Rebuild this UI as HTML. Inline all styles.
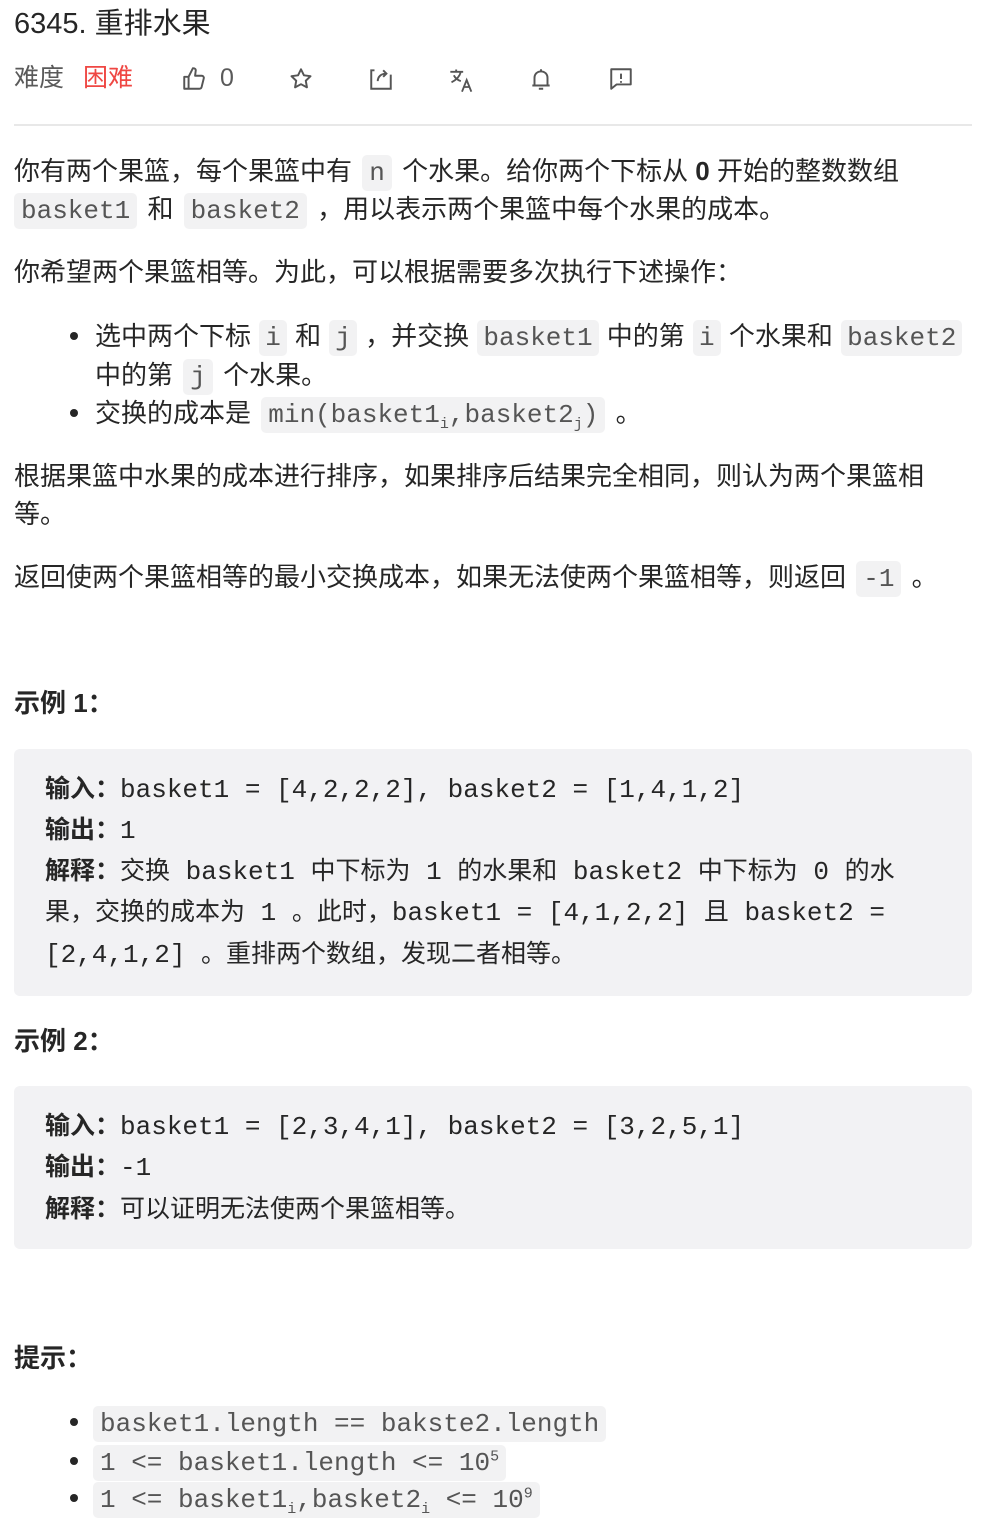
<!DOCTYPE html>
<html><head><meta charset="utf-8"><style>
*{margin:0;padding:0;box-sizing:border-box}
body{width:986px;height:1532px;background:#fff;position:relative;overflow:hidden;font-family:"Liberation Sans","Noto Sans CJK SC",sans-serif;color:#262626;font-size:26px}
.l{position:absolute;left:14px;white-space:nowrap;height:38px;line-height:38px}
code{font-family:"Liberation Mono",monospace;font-size:26px;background:#f2f2f3;color:#555;border-radius:5px;padding:3px 7px;margin:0 3px}
.tight code{padding:3px 6px;margin:0 1px}
.pre{position:absolute;left:14px;width:958px;background:#f2f2f4;border-radius:6px}
.pl{position:absolute;left:31px;white-space:nowrap;height:41px;line-height:41px;font-size:25px}
.m{font-family:"Liberation Mono",monospace;font-size:26px;white-space:pre}
b{font-weight:bold}
.dot{position:absolute;left:70px;width:8px;height:8px;border-radius:50%;background:#262626}
.ic{position:absolute;top:66px}
sub,sup{font-size:15px;line-height:0}
</style></head><body>
<div class="l" style="top:5px;font-size:29px">6345. 重排水果</div>
<div class="l" style="top:59px;color:#5a5a5a;font-size:25px">难度 <span style="color:#ef4743;margin-left:12px">困难</span></div>
<svg class="ic" style="left:181px" width="26" height="26" viewBox="0 0 24 24" fill="none" stroke="#555" stroke-width="1.8" stroke-linejoin="round"><path d="M3 10h4v11H3z M7 10l4-8c2 0 3 1 2.5 3L13 9h6c1.5 0 2.3 1.2 2 2.5l-2 8c-.3 1-1 1.5-2 1.5H7"/></svg>
<div class="l" style="top:59px;left:220px;color:#5a5a5a;font-size:25px">0</div>
<svg class="ic" style="left:288px" width="26" height="26" viewBox="0 0 24 24" fill="none" stroke="#555" stroke-width="1.8" stroke-linejoin="round"><path d="M12 3l2.7 5.6 6.1.8-4.4 4.2 1.1 6.1L12 16.8l-5.5 2.9 1.1-6.1-4.4-4.2 6.1-.8z"/></svg>
<svg class="ic" style="left:368px" width="26" height="26" viewBox="0 0 24 24" fill="none" stroke="#555" stroke-width="1.8"><path d="M6 4H3v17h18V8 M9 14c0-4 3-7 8-7 M14 4l3 3-3 3"/></svg>
<svg class="ic" style="left:448px" width="28" height="28" viewBox="0 0 24 24" fill="none" stroke="#555" stroke-width="1.6"><path d="M2 5h11 M7 3v2 M11 5c-1 4-4 7-8 9 M5 8c1 2 3 4 6 5 M12 22l4-10 4 10 M13.5 18h5"/></svg>
<svg class="ic" style="left:528px" width="26" height="26" viewBox="0 0 24 24" fill="none" stroke="#555" stroke-width="1.8" stroke-linejoin="round"><path d="M6 18V11c0-3.5 2.5-6 6-6s6 2.5 6 6v7H6z M4 18h16 M10 21h4 M12 3v2"/></svg>
<svg class="ic" style="left:608px" width="26" height="26" viewBox="0 0 24 24" fill="none" stroke="#555" stroke-width="1.8" stroke-linejoin="round"><path d="M3 3h18v14H8l-5 4z M12 7v5 M12 14v1.5"/></svg>
<div style="position:absolute;left:14px;top:124px;width:958px;height:2px;background:#e8e8e8"></div>

<div class="l" style="top:152px">你有两个果篮，每个果篮中有 <code>n</code> 个水果。给你两个下标从 <b>0</b> 开始的整数数组</div>
<div class="l" style="top:190px"><code style="margin-left:0">basket1</code> 和 <code>basket2</code> ，用以表示两个果篮中每个水果的成本。</div>
<div class="l" style="top:253px">你希望两个果篮相等。为此，可以根据需要多次执行下述操作：</div>
<div class="dot" style="top:332px"></div>
<div class="l tight" style="top:317px;left:95px">选中两个下标 <code>i</code> 和 <code>j</code> ，并交换 <code>basket1</code> 中的第 <code>i</code> 个水果和 <code>basket2</code></div>
<div class="l" style="top:356px;left:95px">中的第 <code>j</code> 个水果。</div>
<div class="dot" style="top:409px"></div>
<div class="l" style="top:394px;left:95px">交换的成本是 <code>min(basket1<sub>i</sub>,basket2<sub>j</sub>)</code> 。</div>
<div class="l" style="top:457px">根据果篮中水果的成本进行排序，如果排序后结果完全相同，则认为两个果篮相</div>
<div class="l" style="top:495px">等。</div>
<div class="l" style="top:558px">返回使两个果篮相等的最小交换成本，如果无法使两个果篮相等，则返回 <code>-1</code> 。</div>

<div class="l" style="top:684px"><b>示例 1：</b></div>
<div class="pre" style="top:749px;height:247px">
<div class="pl" style="top:20px"><b>输入：</b><span class="m">basket1 = [4,2,2,2], basket2 = [1,4,1,2]</span></div>
<div class="pl" style="top:61px"><b>输出：</b><span class="m">1</span></div>
<div class="pl" style="top:102px"><b>解释：</b>交换<span class="m"> basket1 </span>中下标为<span class="m"> 1 </span>的水果和<span class="m"> basket2 </span>中下标为<span class="m"> 0 </span>的水</div>
<div class="pl" style="top:143px">果，交换的成本为<span class="m"> 1 </span>。此时，<span class="m">basket1 = [4,1,2,2] </span>且<span class="m"> basket2 =</span></div>
<div class="pl" style="top:185px"><span class="m">[2,4,1,2] </span>。重排两个数组，发现二者相等。</div>
</div>
<div class="l" style="top:1022px"><b>示例 2：</b></div>
<div class="pre" style="top:1086px;height:163px">
<div class="pl" style="top:20px"><b>输入：</b><span class="m">basket1 = [2,3,4,1], basket2 = [3,2,5,1]</span></div>
<div class="pl" style="top:61px"><b>输出：</b><span class="m">-1</span></div>
<div class="pl" style="top:103px"><b>解释：</b>可以证明无法使两个果篮相等。</div>
</div>

<div class="l" style="top:1339px"><b>提示：</b></div>
<div class="dot" style="top:1418px"></div>
<div class="l" style="top:1403px;left:90px"><code>basket1.length == bakste2.length</code></div>
<div class="dot" style="top:1457px"></div>
<div class="l" style="top:1442px;left:90px"><code>1 &lt;= basket1.length &lt;= 10<sup>5</sup></code></div>
<div class="dot" style="top:1494px"></div>
<div class="l" style="top:1479px;left:90px"><code>1 &lt;= basket1<sub>i</sub>,basket2<sub>i</sub> &lt;= 10<sup>9</sup></code></div>
</body></html>
